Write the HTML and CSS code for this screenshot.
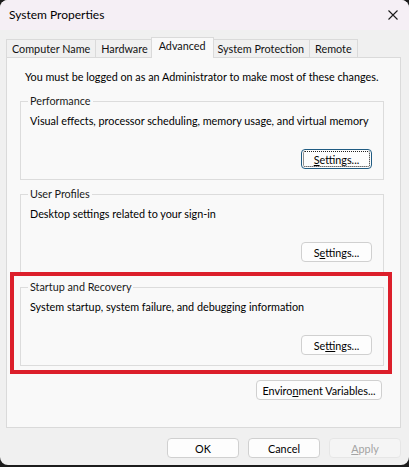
FILE: index.html
```html
<!DOCTYPE html>
<html>
<head>
    <title>System Properties</title>
    <link rel="stylesheet" href="styles.css">
</head>
<body>
    <div class="window">
        <div class="titlebar">
            <span class="title">System Properties</span>
            <svg class="close" width="10" height="10" viewBox="0 0 10 10">
                <path d="M0.5 0.5 L9.5 9.5 M9.5 0.5 L0.5 9.5" stroke="#1a1a1a" stroke-width="1.1" fill="none"/>
            </svg>
        </div>
        <div class="content">
            <div class="tabs">
                <div class="tab">Computer Name</div>
                <div class="tab">Hardware</div>
                <div class="tab active">Advanced</div>
                <div class="tab">System Protection</div>
                <div class="tab">Remote</div>
            </div>
            <div class="panel">
                <p class="note">You must be logged on as an Administrator to make most of these changes.</p>

                <fieldset class="group">
                    <legend>Performance</legend>
                    <p class="desc">Visual effects, processor scheduling, memory usage, and virtual memory</p>
                    <div class="row">
                        <button class="btn focused"><u>S</u>ettings...</button>
                    </div>
                </fieldset>

                <fieldset class="group">
                    <legend>User Profiles</legend>
                    <p class="desc">Desktop settings related to your sign-in</p>
                    <div class="row">
                        <button class="btn">S<u>e</u>ttings...</button>
                    </div>
                </fieldset>

                <div class="marked">
                    <fieldset class="group">
                        <legend>Startup and Recovery</legend>
                        <p class="desc">System startup, system failure, and debugging information</p>
                        <div class="row">
                            <button class="btn">Se<u>t</u>tings...</button>
                        </div>
                    </fieldset>
                </div>

                <div class="row env-row">
                    <button class="btn env">Enviro<u>n</u>ment Variables...</button>
                </div>
            </div>
            <div class="footer">
                <button class="btn">OK</button>
                <button class="btn">Cancel</button>
                <button class="btn" disabled><u>A</u>pply</button>
            </div>
        </div>
    </div>
</body>
</html>
```

FILE: styles.css
```css
html, body {
    margin: 0;
    padding: 0;
}
body {
    background: #1c1c1c;
    font-family: Lato, "Liberation Sans", sans-serif;
    font-size: 10.8px;
    color: #000;
    white-space: nowrap;
}
.window {
    width: 409px;
    height: 465px;
    background: #f0f0f0;
    border-radius: 8px;
    overflow: hidden;
}
.titlebar {
    height: 30px;
    background: #f5eff5;
    display: flex;
    align-items: center;
    justify-content: space-between;
    padding: 0 11px 0 9px;
}
.title {
    font-size: 12px;
    line-height: 16px;
}
.content {
    padding: 7px 8px 0 6px;
}
.tabs {
    display: flex;
    align-items: flex-end;
    height: 20px;
}
.tab {
    height: 17px;
    line-height: 17px;
    padding: 0 5px;
    border: 1px solid #dadada;
    border-bottom: none;
    margin-right: -1px;
    background: #f0f0f0;
    color: #111;
}
.tab.active {
    position: relative;
    z-index: 1;
    height: 20px;
    line-height: 16px;
    margin: 0 -2px -1px -2px;
    padding: 0 7px;
    background: #f9f9f9;
}
.panel {
    height: 358px;
    border: 1px solid #dadada;
    background: #f9f9f9;
    padding: 11px 16px 0 13px;
}
.note {
    margin: 0 0 8px 5px;
    line-height: 16px;
}
.group {
    margin: 0 0 6px 0;
    padding: 4px 11px 10px 9px;
    border: 1px solid #dcdcdc;
    min-width: 0;
}
.group legend {
    padding: 0 2px;
    margin-left: -2px;
    line-height: 16px;
    color: #1a1a1a;
}
.desc {
    margin: 0 0 20px 0;
    line-height: 16px;
}
.row {
    display: flex;
    justify-content: flex-end;
}
.btn {
    position: relative;
    width: 71px;
    height: 20px;
    padding: 0;
    border: 1px solid #d0d0d0;
    border-radius: 4px;
    background: #fdfdfd;
    font-family: inherit;
    font-size: 10.8px;
    color: #000;
}
.btn u {
    text-underline-offset: 1px;
}
.btn.focused {
    border-color: #1f5b82;
}
.btn.focused::after {
    content: "";
    position: absolute;
    inset: 1px;
    border: 1px dotted #222;
    border-radius: 2px;
}
.btn:disabled {
    background: #f5f5f5;
    border-color: #e6e6e6;
    color: #a3a3a3;
}
.marked {
    position: relative;
}
.marked::after {
    content: "";
    position: absolute;
    top: -7px;
    left: -10px;
    right: -8px;
    bottom: -8px;
    border: 4px solid #dc1f2b;
    pointer-events: none;
}
.env-row {
    margin-top: 14px;
    padding-right: 2px;
}
.btn.env {
    width: 126px;
}
.footer {
    display: flex;
    justify-content: flex-end;
    gap: 9px;
    padding-top: 10px;
}
.footer .btn {
    width: 72px;
}
```
